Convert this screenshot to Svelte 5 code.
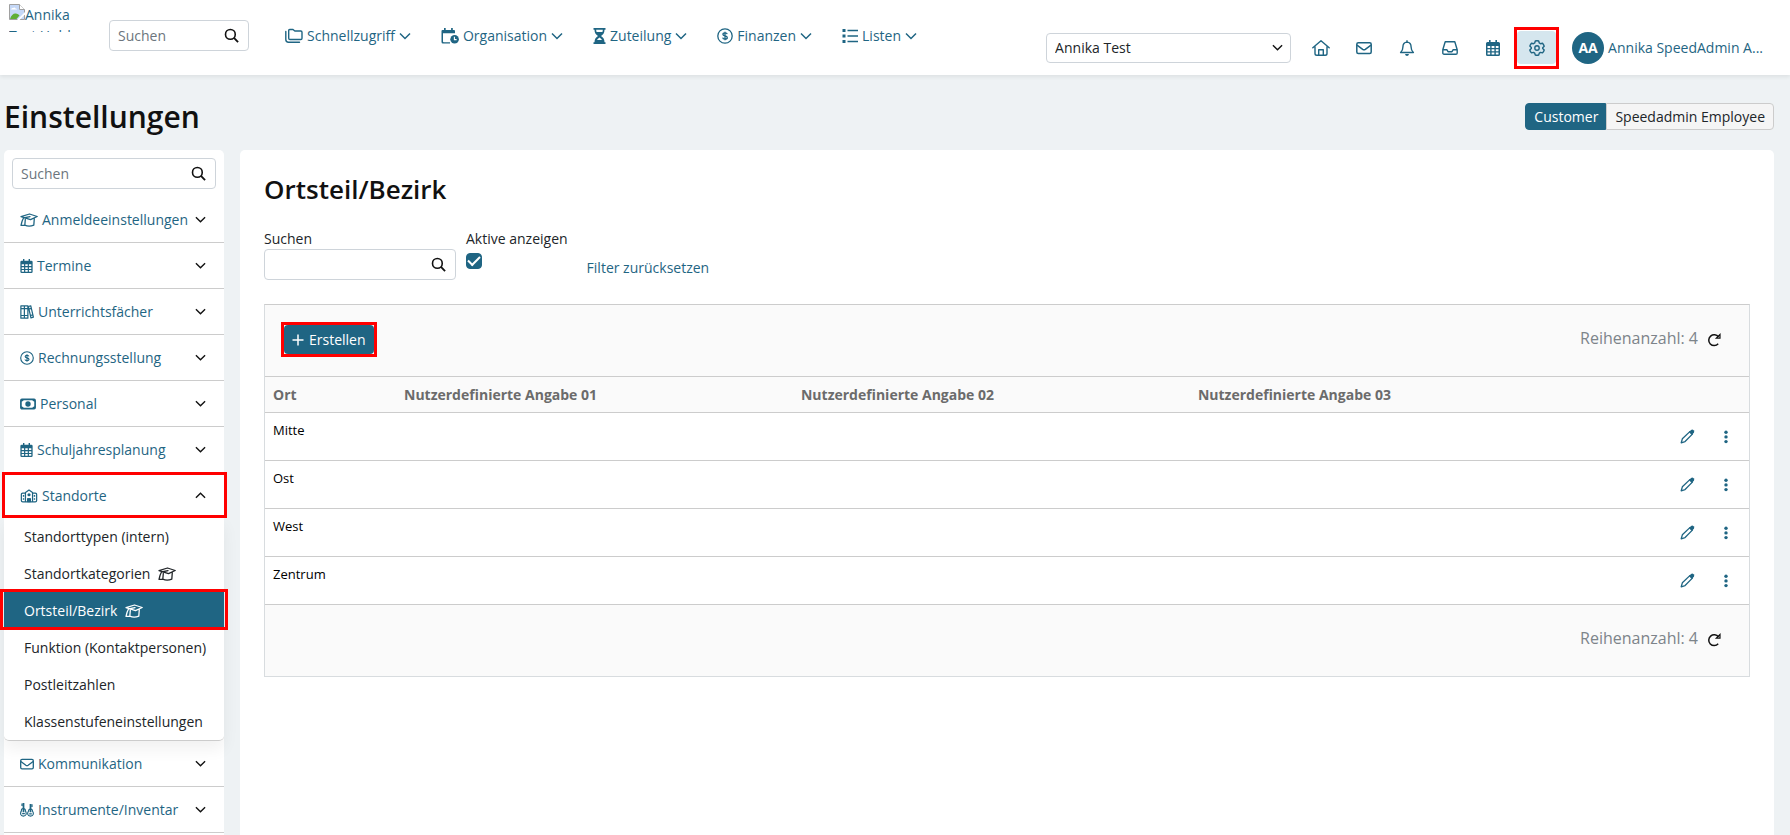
<script>
	let query = '';
	let menuQuery = '';
	let filter = '';
	let onlyActive = true;
	let client = 'Annika Test';
	let openMenu = 'Standorte';

	const nav = [
		{ label: 'Schnellzugriff', icon: 'folders', w: 18 },
		{ label: 'Organisation', icon: 'calclock', w: 18 },
		{ label: 'Zuteilung', icon: 'hourglass', w: 13 },
		{ label: 'Finanzen', icon: 'dollar', w: 16 },
		{ label: 'Listen', icon: 'list', w: 16 }
	];

	const tools = [
		{ label: 'Startseite', icon: 'house', w: 18 },
		{ label: 'Nachrichten', icon: 'envelope', w: 16 },
		{ label: 'Benachrichtigungen', icon: 'bell', w: 16 },
		{ label: 'Posteingang', icon: 'inbox', w: 16 },
		{ label: 'Kalender', icon: 'calendar', w: 16 },
		{ label: 'Einstellungen', icon: 'gear', w: 16, active: true }
	];

	const menu = [
		{ label: 'Anmeldeeinstellungen', icon: 'cap', w: 18 },
		{ label: 'Termine', icon: 'calendar', w: 13 },
		{ label: 'Unterrichtsfächer', icon: 'books', w: 14 },
		{ label: 'Rechnungsstellung', icon: 'dollar', w: 14 },
		{ label: 'Personal', icon: 'cash', w: 16 },
		{ label: 'Schuljahresplanung', icon: 'calendar', w: 13 },
		{
			label: 'Standorte',
			icon: 'school',
			w: 18,
			items: [
				{ label: 'Standorttypen (intern)' },
				{ label: 'Standortkategorien', cap: true },
				{ label: 'Ortsteil/Bezirk', cap: true, active: true },
				{ label: 'Funktion (Kontaktpersonen)' },
				{ label: 'Postleitzahlen' },
				{ label: 'Klassenstufeneinstellungen' }
			]
		},
		{ label: 'Kommunikation', icon: 'envelope', w: 14 },
		{ label: 'Instrumente/Inventar', icon: 'guitars', w: 14 }
	];

	const places = ['Mitte', 'Ost', 'West', 'Zentrum'];

	// [viewBox, markup]
	const icons = {
		search: ['0 0 16 16', '<g fill="none" stroke="currentColor" stroke-width="1.7"><circle cx="6.8" cy="6.8" r="5.2"/><path d="M10.6 10.6 15 15" stroke-width="2"/></g>'],
		down: ['0 0 12 12', '<path d="M1 3.5 6 8.5 11 3.5" fill="none" stroke="currentColor" stroke-width="1.5"/>'],
		up: ['0 0 12 12', '<path d="M1 8.5 6 3.5 11 8.5" fill="none" stroke="currentColor" stroke-width="1.5"/>'],
		folders: ['0 0 18 16', '<g fill="none" stroke="currentColor" stroke-width="1.4" stroke-linejoin="round" stroke-linecap="round"><path d="M3.7 10.2V2.5q0-1 1-1H8l1.8 1.5h6q1.2 0 1.2 1.2v6q0 1.3-1.2 1.3H5q-1.3 0-1.3-1.3z"/><path d="M.8 3.5v8q0 2.7 2.7 2.7h11"/></g>'],
		calclock: ['0 0 18 16', '<path d="M3 0h1.700v2h5.400V0h1.700v2H13q1 0 1 1v2.200H2v8.200q0 .8.800.8H9v1.300H1.900Q.5 15.500.5 14V3q0-1 1-1H3z" fill="currentColor"/><circle cx="13.600" cy="11.300" r="4.300" fill="currentColor"/><path d="M13.400 8.700v2.900h2.200" fill="none" stroke="#fff" stroke-width="1.1"/>'],
		hourglass: ['0 0 13 16', '<path fill="currentColor" fill-rule="evenodd" d="M.5 0h12v1.800h-1Q11.500 6 8 8q3.500 2 3.500 6.200h1V16H.5v-1.800h1Q1.500 10 5 8 1.500 6 1.500 1.800h-1zM3.200 1.800q0 1.200.4 2.200h5.800q.4-1 .4-2.200zM6.500 9.500Q4.700 10.500 4 12h5q-.7-1.500-2.500-2.500z"/>'],
		dollar: ['0 0 16 16', '<circle cx="8" cy="8" r="7.2" fill="none" stroke="currentColor" stroke-width="1.3"/><path d="M10.200 6.200Q9.900 4.900 8 4.900 5.900 4.900 5.900 6.300 5.900 7.500 8 7.900 10.300 8.300 10.300 9.700 10.300 11.100 8 11.100 5.900 11.100 5.700 9.700M8 3.700v8.600" fill="none" stroke="currentColor" stroke-width="1.3"/>'],
		list: ['0 0 16 16', '<path fill="currentColor" d="M.5 1h3v3h-3zM.5 6.500h3v3h-3zM.5 12h3v3h-3zM5.500 1.800H16v1.500H5.500zM5.500 7.300H16v1.500H5.500zM5.500 12.700H16v1.500H5.500z"/>'],
		house: ['0 0 18 16', '<g fill="none" stroke="currentColor" stroke-width="1.4" stroke-linejoin="round" stroke-linecap="round"><path d="M.8 7.800 9 .8l8.200 7M3 6.500v7q0 1.800 1.800 1.800h8.400q1.800 0 1.800-1.800v-7M6.700 15.200V9.700h4.600v5.500"/></g>'],
		envelope: ['0 0 16 16', '<g fill="none" stroke="currentColor" stroke-width="1.5" stroke-linejoin="round"><rect x=".8" y="2.700" width="14.400" height="10.800" rx="1.500"/><path d="m1 5.200 5.700 4.200q1.300.9 2.600 0L15 5.200"/></g>'],
		bell: ['0 0 16 16', '<path d="M8 2.100Q3.900 2.400 3.900 7q0 3.500-2.300 5.500h12.800Q12.100 10.500 12.100 7 12.100 2.400 8 2.100z" fill="none" stroke="currentColor" stroke-width="1.400" stroke-linejoin="round"/><path d="M7.300.3h1.400v2H7.300zM6 14h4q-.4 2-2 2t-2-2z" fill="currentColor"/>'],
		inbox: ['0 0 16 16', '<path d="M3.200 1.700h9.600l2.400 8v3.200q0 1.300-1.300 1.300H2.100Q.8 14.200.8 12.900V9.700zM.8 9.700h4l1.200 2h4l1.200-2h4" fill="none" stroke="currentColor" stroke-width="1.400" stroke-linejoin="round"/>'],
		calendar: ['1 0 14 16', '<path fill="currentColor" fill-rule="evenodd" d="M4 0h1.600v2h4.800V0H12v2h1.500Q15 2 15 3.500v11Q15 16 13.500 16h-11Q1 16 1 14.500v-11Q1 2 2.500 2H4zM2.500 6v2h2.700V6zm4.100 0v2h2.800V6zm4.200 0v2h2.700V6zM2.500 9.300v2h2.700v-2zm4.100 0v2h2.800v-2zm4.200 0v2h2.700v-2zM2.500 12.600v1.900h2.700v-1.900zm4.100 0v1.900h2.800v-1.900zm4.200 0v1.900h2.700v-1.900z"/>'],
		gear: ['0 0 16 16', '<g fill="none" stroke="currentColor" stroke-width="1.400" stroke-linejoin="round"><path d="M6.300 1q1.700-.5 3.400 0l.6 2 1.200.7 2-.5q1.200 1.300 1.700 3L13.700 7.700v.9l1.500 1.400q-.5 1.600-1.700 2.900l-2-.5-1.200.7-.6 1.900q-1.700.5-3.400 0l-.6-1.900-1.200-.7-2 .5Q1.300 11.600.8 10l1.500-1.500v-1L.8 6.100q.5-1.600 1.700-2.900l2 .5L5.700 3z"/><circle cx="8" cy="8" r="2.200"/></g>'],
		cap: ['0 0 18 14', '<g fill="none" stroke="currentColor" stroke-width="1.3" stroke-linejoin="round" stroke-linecap="round"><path d="M1 3.700 9.500 1 17.200 3.500 10.500 6.600zM5.300 6.500 4.800 12.200Q9 14.200 13.800 12.200L14.300 5.500M10 3.700 3.500 5Q1.800 8 1 12.300H4.500"/></g>'],
		books: ['0 0 16 16', '<g fill="none" stroke="currentColor" stroke-width="1.400" stroke-linejoin="round"><path d="M1 1h4v14H1zM5 1h4v14H5zM9.500 1.700l2.800-.8 3 13-2.800.9zM1 4.200h8M1 12h8M10.200 4.700l2.800-.8M12 12l2.800-.8"/></g>'],
		cash: ['0 0 16 12', '<rect x=".9" y="1.400" width="14.200" height="9.200" rx="1" fill="none" stroke="currentColor" stroke-width="1.700"/><circle cx="8" cy="6" r="2.700" fill="currentColor"/><path fill="currentColor" d="M1 1h3q-.3 2.500-3 2.800zM15 1h-3q.3 2.500 3 2.800zM1 11h3q-.3-2.500-3-2.800zM15 11h-3q.3-2.500 3-2.800z"/>'],
		school: ['0 0 18 15', '<g fill="none" stroke="currentColor" stroke-width="1.300" stroke-linejoin="round"><path d="M5.200 13.800V3.800L9 1.100l3.800 2.700v10M5.200 4.500H2.300Q.8 4.500.8 6v6.300q0 1.500 1.500 1.500h13.400q1.500 0 1.500-1.500V6q0-1.500-1.500-1.500h-2.900M7.500 13.800v-3.300h3v3.300"/></g><path fill="currentColor" d="M2.400 6.500h1.500v1.700H2.400zM2.400 9.800h1.500v1.700H2.400zM14.100 6.500h1.500v1.700h-1.500zM14.100 9.800h1.500v1.700h-1.500zM7.300 10h3.400v4.300H7.300z"/><circle cx="9" cy="6.200" r="1.700" fill="currentColor"/>'],
		guitars: ['0 0 16 16', '<g fill="none" stroke="currentColor" stroke-width="1.300" stroke-linejoin="round"><path d="M3.700 6.500Q1.300 6.500 1.600 9 .4 10.500.8 13q.7 2 3 2t3.200-2q.3-2.300-.8-4Q6.300 6.500 3.700 6.500zM12 7q-2.300 0-2.200 2.300Q8.400 10.700 8.900 13q.6 2 3.100 2t3.100-2q.5-2.300-.9-3.700Q14.400 7 12 7z"/></g><path fill="currentColor" d="M3 0h2v10.500H3zM1.600.5h1.200v3H1.600zM11 1h2v9.500h-2zM13.200 1.500h1.200v3h-1.200zM2.500 11.500h3v1.300h-3zM10.500 11.700h3V13h-3z"/>'],
		plus: ['0 0 12 12', '<path d="M6 .5v11M.5 6h11" stroke="currentColor" stroke-width="1.5"/>'],
		reload: ['0 0 14 14', '<path d="M11.200 10.800A5.400 5.400 0 1 1 11.500 4" fill="none" stroke="currentColor" stroke-width="1.500"/><path d="M13 1.500v3.700H9.300z" fill="none" stroke="currentColor" stroke-width="1.200"/>'],
		pencil: ['0 0 16 16', '<path d="M1.300 14.700 2.500 10.500 10.500 2.800 13.200 5.500 5.400 13.400z" fill="none" stroke="currentColor" stroke-width="1.400" stroke-linejoin="round"/><path fill="currentColor" d="M9.500 3.200 11.800 1q1.400-1 2.700.3t.3 2.800L12.600 6.500z"/>'],
		dots: ['0 0 4 14', '<g fill="currentColor"><circle cx="2" cy="2.200" r="1.700"/><circle cx="2" cy="6.900" r="1.700"/><circle cx="2" cy="11.600" r="1.700"/></g>']
	};

	function toggle(label) {
		openMenu = openMenu === label ? '' : label;
	}

	function resetFilter() {
		filter = '';
		onlyActive = true;
	}
</script>

{#snippet icon(name, w = 16, h = 16)}
	<svg class="icon" viewBox={icons[name][0]} width={w} height={h} aria-hidden="true">{@html icons[name][1]}</svg>
{/snippet}

{#snippet rowCount()}
	<div class="count">
		<span>Reihenanzahl: 4</span>
		<button class="plain" aria-label="Aktualisieren">{@render icon('reload', 14, 14)}</button>
	</div>
{/snippet}

<div class="page">
	<header>
		<a class="logo" href="#start">
			<svg viewBox="0 0 16 16" width="16" height="16" aria-hidden="true">
				<path d="M.5.5h10l5 5v10H.5z" fill="#c5d8f7" stroke="#a0a0a0" />
				<path d="M10.500.500v5h5" fill="#fff" stroke="#a0a0a0" />
				<path d="M2 5.500q.3-1.800 2-1.500 1.800-1.300 2.500.5 1.500 0 1.500 1z" fill="#fff" />
				<path d="M1 15q2-6 6-5.500 2.500.5 3.500 2L7.500 15z" fill="#5fae35" />
				<path d="m8 16 8-8v2.500L10.500 16z" fill="#fff" />
			</svg><span>Annika Test Hold</span>
		</a>
		<div class="search top-search">
			<input type="text" placeholder="Suchen" aria-label="Suchen" bind:value={query} />
			<button class="plain" aria-label="Suche starten">{@render icon('search', 15, 15)}</button>
		</div>
		<nav>
			{#each nav as item}
				<button class="nav-item">
					{@render icon(item.icon, item.w)}
					<span>{item.label}</span>
					{@render icon('down', 12, 12)}
				</button>
			{/each}
		</nav>
		<div class="tools">
			<div class="select">
				<select aria-label="Mandant" bind:value={client}>
					<option>Annika Test</option>
				</select>
				{@render icon('down', 11, 11)}
			</div>
			{#each tools as tool}
				<button class="tool" class:active={tool.active} aria-label={tool.label}>
					{@render icon(tool.icon, tool.w)}
				</button>
			{/each}
			<a class="user" href="#profil">
				<span class="avatar">AA</span>
				<span>Annika SpeedAdmin A...</span>
			</a>
		</div>
	</header>

	<div class="title-bar">
		<h1>Einstellungen</h1>
		<div class="switch">
			<button class="on">Customer</button>
			<button>Speedadmin Employee</button>
		</div>
	</div>

	<div class="columns">
		<aside>
			<div class="search side-search">
				<input type="text" placeholder="Suchen" aria-label="Menü durchsuchen" bind:value={menuQuery} />
				<button class="plain" aria-label="Suche starten">{@render icon('search', 15, 15)}</button>
			</div>
			{#each menu as group}
				<button class="group" class:marked={group.items} on:click={() => toggle(group.label)}>
					{@render icon(group.icon, group.w, 14)}
					<span>{group.label}</span>
					<span class="caret">{@render icon(openMenu === group.label ? 'up' : 'down', 11, 11)}</span>
				</button>
				{#if group.items && openMenu === group.label}
					<ul class="submenu">
						{#each group.items as item}
							<li>
								<a href="#{item.label}" class:current={item.active}>
									{item.label}
									{#if item.cap}{@render icon('cap', 18, 14)}{/if}
								</a>
							</li>
						{/each}
					</ul>
				{/if}
			{/each}
		</aside>

		<main>
			<h2>Ortsteil/Bezirk</h2>
			<div class="filters">
				<div class="field">
					<label for="filter">Suchen</label>
					<div class="search">
						<input id="filter" type="text" bind:value={filter} />
						<button class="plain" aria-label="Suche starten">{@render icon('search', 15, 15)}</button>
					</div>
				</div>
				<div class="field">
					<label for="active">Aktive anzeigen</label>
					<input id="active" type="checkbox" bind:checked={onlyActive} />
				</div>
				<button class="plain reset" on:click={resetFilter}>Filter zurücksetzen</button>
			</div>

			<div class="grid">
				<div class="bar">
					<button class="create">
						{@render icon('plus', 12, 12)}
						<span>Erstellen</span>
					</button>
					{@render rowCount()}
				</div>
				<table>
					<thead>
						<tr>
							<th class="place">Ort</th>
							<th class="custom">Nutzerdefinierte Angabe 01</th>
							<th class="custom">Nutzerdefinierte Angabe 02</th>
							<th class="custom">Nutzerdefinierte Angabe 03</th>
							<th></th>
						</tr>
					</thead>
					<tbody>
						{#each places as place}
							<tr>
								<td>{place}</td>
								<td></td>
								<td></td>
								<td></td>
								<td>
									<div class="actions">
										<button class="plain" aria-label="{place} bearbeiten">{@render icon('pencil', 15, 15)}</button>
										<button class="plain" aria-label="Mehr zu {place}">{@render icon('dots', 4, 14)}</button>
									</div>
								</td>
							</tr>
						{/each}
					</tbody>
				</table>
				<div class="bar">
					{@render rowCount()}
				</div>
			</div>
		</main>
	</div>
</div>

<style>
	:global(body) {
		background: #eef2f4;
		color: #212529;
		font: 14px/21px "Open Sans", sans-serif;
	}
	* {
		box-sizing: border-box;
	}
	button,
	input,
	select {
		font: inherit;
		color: inherit;
	}
	button {
		cursor: pointer;
	}
	a {
		color: #1f6583;
		text-decoration: none;
	}
	.icon {
		display: block;
		flex: none;
	}
	.plain {
		display: flex;
		border: 0;
		padding: 0;
		background: none;
	}
	.page {
		display: flex;
		flex-direction: column;
		min-height: 100vh;
	}

	header {
		display: flex;
		align-items: flex-start;
		height: 75px;
		padding: 0 27px 0 9px;
		background: #fff;
		box-shadow: 0 2px 4px rgba(0, 0, 0, 0.07);
	}
	.logo {
		width: 70px;
		height: 28px;
		margin: 4px 30px 0 0;
		overflow: hidden;
	}
	.logo svg {
		vertical-align: top;
	}
	.search {
		display: flex;
		align-items: center;
		height: 31px;
		padding: 0 9px 0 8px;
		border: 1px solid #ced4da;
		border-radius: 4px;
		background: #fff;
	}
	.search input {
		flex: 1;
		min-width: 0;
		padding: 0;
		border: 0;
		outline: 0;
		background: none;
	}
	.search input::placeholder {
		color: #6c757d;
		opacity: 1;
	}
	.search button {
		color: #111;
	}
	.top-search {
		width: 140px;
		margin-top: 20px;
	}
	nav {
		display: flex;
		gap: 30px;
		margin: 25px 0 0 36px;
	}
	.nav-item {
		display: flex;
		align-items: center;
		gap: 4px;
		padding: 0;
		border: 0;
		background: none;
		color: #1f6583;
	}
	.tools {
		display: flex;
		align-items: center;
		margin: 31px 0 0 auto;
	}
	.select {
		display: flex;
		align-items: center;
		width: 245px;
		height: 30px;
		margin-right: 8px;
		padding-right: 7px;
		border: 1px solid #ced4da;
		border-radius: 4px;
	}
	.select select {
		flex: 1;
		height: 28px;
		margin-right: -11px;
		padding: 0 8px;
		border: 0;
		background: none;
		appearance: none;
	}
	.select .icon,
	.caret {
		color: #111;
		pointer-events: none;
	}
	.tool {
		position: relative;
		display: flex;
		align-items: center;
		justify-content: center;
		width: 43px;
		height: 33px;
		padding: 0;
		border: 0;
		background: none;
		color: #1f6583;
	}
	.tool.active {
		width: 39px;
		margin-left: 3px;
		border-radius: 4px;
		background: #d5e6ee;
	}
	.tool.active::after,
	.marked::after,
	.current::after,
	.create::after {
		content: "";
		position: absolute;
		inset: -3px;
		border: 3px solid #f00;
		pointer-events: none;
	}
	.tool.active::after {
		inset: -4px -3px -5px;
	}
	.user {
		display: flex;
		align-items: center;
		gap: 4px;
		margin-left: 16px;
		white-space: nowrap;
	}
	.avatar {
		width: 32px;
		border-radius: 50%;
		background: #1f6583;
		color: #fff;
		font-weight: 700;
		line-height: 32px;
		text-align: center;
	}

	.title-bar {
		display: flex;
		align-items: center;
		justify-content: space-between;
		height: 75px;
		padding: 8px 16px 0 4px;
	}
	h1,
	h2 {
		margin: 0;
		color: #111;
		font-weight: 600;
	}
	h1 {
		font-size: 30px;
		line-height: 36px;
	}
	h2 {
		font-size: 26px;
		line-height: 30px;
	}
	.switch {
		display: flex;
	}
	.switch button {
		height: 27px;
		padding: 0 8px;
		border: 1px solid #ccc;
		border-radius: 0 4px 4px 0;
		background: #f5f5f5;
	}
	.switch .on {
		padding: 0 7px 0 8px;
		border-color: #1f6583;
		border-radius: 4px 0 0 4px;
		background: #1f6583;
		color: #fff;
		font-weight: 500;
	}

	.columns {
		display: flex;
		flex: 1;
		gap: 16px;
		padding: 0 16px 0 4px;
	}
	aside {
		flex: none;
		width: 220px;
		border-radius: 5px 5px 0 0;
		background: #fff;
	}
	.side-search {
		margin: 8px;
	}
	.group {
		position: relative;
		display: flex;
		align-items: center;
		gap: 4px;
		width: 100%;
		height: 46px;
		padding: 0 18px 0 16px;
		border: 0;
		border-bottom: 1px solid #ccc;
		background: none;
		color: #1f6583;
	}
	.caret {
		margin-left: auto;
	}
	.marked {
		height: 45px;
		border-bottom: 0;
	}
	.marked::after {
		inset: -1px -3px 0 -2px;
	}
	.submenu {
		margin: 0;
		padding: 0;
		border-bottom: 1px solid #ccc;
		border-radius: 0 0 5px 5px;
		box-shadow: 0 8px 16px rgba(0, 0, 0, 0.06);
		list-style: none;
	}
	.submenu a {
		position: relative;
		display: flex;
		align-items: center;
		gap: 8px;
		height: 37px;
		padding-left: 20px;
		color: #212529;
	}
	.submenu .current {
		background: #1f6583;
		color: #fff;
		font-weight: 500;
	}
	.current::after {
		inset: -3px -4px -1px;
	}

	main {
		flex: 1;
		min-width: 0;
		padding: 24px;
		border-radius: 5px 5px 0 0;
		background: #fff;
	}
	.filters {
		display: flex;
		gap: 10px;
		margin: 24px 0;
	}
	.filters label {
		display: block;
	}
	.filters .search {
		width: 192px;
	}
	.filters .field {
		display: flex;
		flex-direction: column;
	}
	input[type="checkbox"] {
		display: grid;
		place-items: center;
		width: 16px;
		height: 16px;
		margin: 4px 0 0;
		border: 1px solid #1f6583;
		border-radius: 4px;
		appearance: none;
	}
	input[type="checkbox"]:checked {
		background: #1f6583;
	}
	input[type="checkbox"]:checked::before {
		content: "";
		width: 10px;
		height: 5px;
		margin-bottom: 3px;
		border: solid #fff;
		border-width: 0 0 2px 2px;
		transform: rotate(-45deg);
	}
	.reset {
		align-self: flex-end;
		margin: 0 0 2px 9px;
		color: #1f6583;
	}

	.grid {
		border: 1px solid #d8dcdf;
		border-top-color: #ccc;
		background: #fafafa;
	}
	.bar {
		display: flex;
		align-items: center;
		height: 71px;
		padding: 0 28px 2px 19px;
	}
	.create {
		position: relative;
		display: flex;
		align-items: center;
		gap: 5px;
		height: 29px;
		padding: 0 8px;
		border: 0;
		border-radius: 4px;
		background: #1f6583;
		color: #fff;
	}
	.count {
		display: flex;
		align-items: center;
		gap: 9px;
		margin-left: auto;
		padding-bottom: 2px;
		color: #7d848a;
		font-size: 16px;
	}
	.count button {
		padding-top: 2px;
		color: #111;
	}
	table {
		width: 100%;
		border-collapse: collapse;
		table-layout: fixed;
	}
	th {
		height: 36px;
		padding: 0 8px;
		border: solid #ccc;
		border-width: 1px 0;
		color: #6b6b6b;
		font-weight: 700;
		text-align: left;
	}
	.place {
		width: 131px;
	}
	.custom {
		width: 26.75%;
	}
	td {
		height: 48px;
		padding: 7px 8px;
		border-bottom: 1px solid #ccc;
		background: #fff;
		color: #000;
		font-size: 13px;
		vertical-align: top;
	}
	.actions {
		display: flex;
		align-items: center;
		justify-content: flex-end;
		gap: 29px;
		height: 33px;
		padding-right: 13px;
	}
	.actions button {
		color: #1f6583;
	}
</style>
